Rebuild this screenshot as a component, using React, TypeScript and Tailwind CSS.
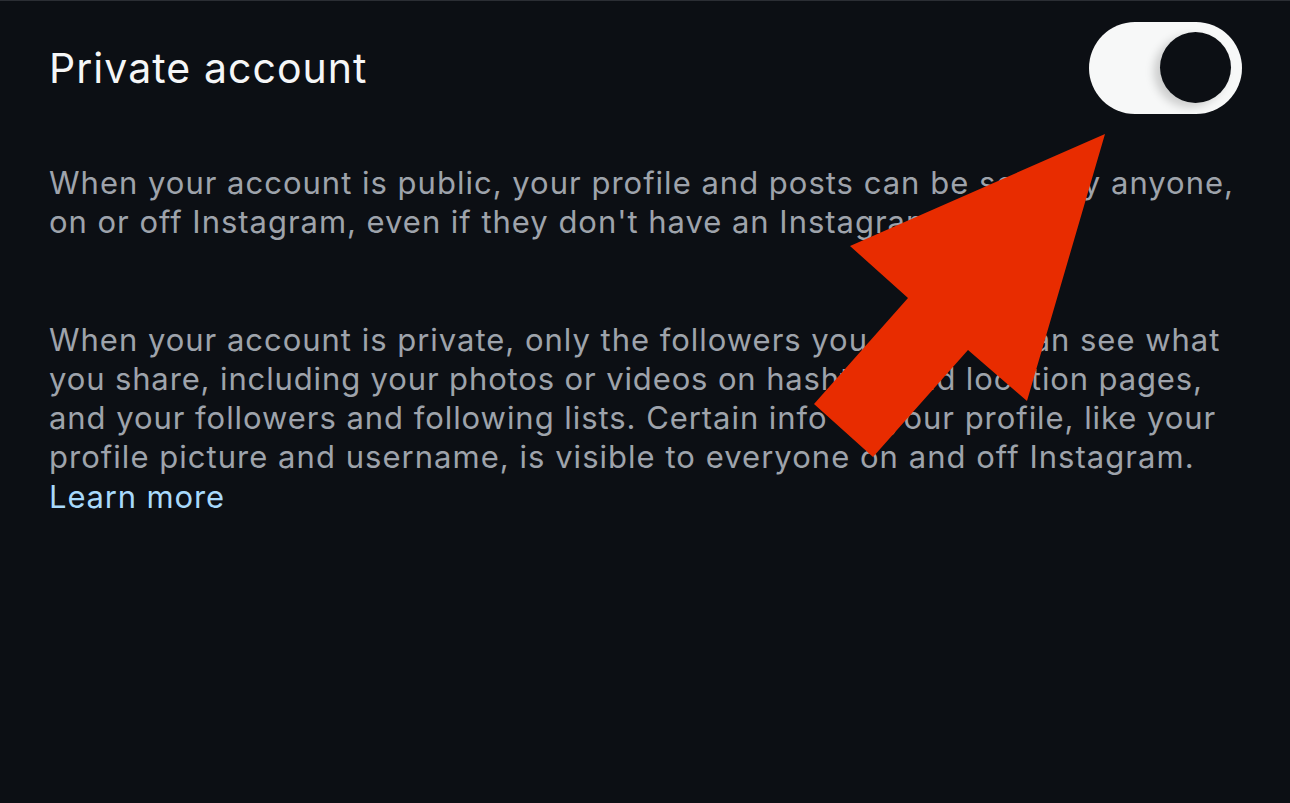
import React from "react";

export default function App() {
  const p1: [string, string][] = [
    ["When your account is public, your profile and posts can be seen by anyone,", "tracking-[1px]"],
    ["on or off Instagram, even if they don't have an Instagram account.", "tracking-[0.97px]"],
  ];
  const p2: [string, string][] = [
    ["When your account is private, only the followers you approve can see what", "tracking-[0.98px]"],
    ["you share, including your photos or videos on hashtag and location pages,", "tracking-[0.87px]"],
    ["and your followers and following lists. Certain info on your profile, like your", "tracking-[0.95px]"],
    ["profile picture and username, is visible to everyone on and off Instagram.", "tracking-[1.03px]"],
  ];
  return (
    <div
      className="relative w-[1290px] h-[803px] bg-[#0c0f14] border-t border-[#2b2e34] overflow-hidden"
      style={{ fontFamily: "Inter, 'Noto Sans', sans-serif" }}
    >
      <div className="pl-[49px] pr-[48px]">
        <div className="flex items-center justify-between pt-[20px] h-[113px]">
          <div className="text-[41px] leading-none text-[#f5f6f7] tracking-[1.05px] pt-[2px]">Private account</div>
          <div className="w-[153px] h-[92px] rounded-full bg-[#f7f8f8] flex items-center justify-end pr-[11px]">
            <div className="w-[71px] h-[71px] rounded-full bg-[#0c0f14] shadow-[-6px_4px_10px_rgba(0,0,0,0.18)]" />
          </div>
        </div>
        <div className="mt-[49px] text-[31px] leading-[39.3px] text-[#9ea3ab]">
          {p1.map(([l, c]) => (
            <div key={l} className={"whitespace-nowrap " + c}>{l}</div>
          ))}
          <div className="h-[78px]" />
          {p2.map(([l, c]) => (
            <div key={l} className={"whitespace-nowrap " + c}>{l}</div>
          ))}
          <div className="text-[#a8d9fb] tracking-[0.85px]">Learn more</div>
        </div>
      </div>
      <svg className="absolute left-0 top-0 pointer-events-none" width="1290" height="803" viewBox="0 0 1290 803">
        <polygon
          points="1105,133 1027,400 968,349 873,456 814,403 908,297 850,245"
          fill="#e82c00"
        />
      </svg>
    </div>
  );
}
